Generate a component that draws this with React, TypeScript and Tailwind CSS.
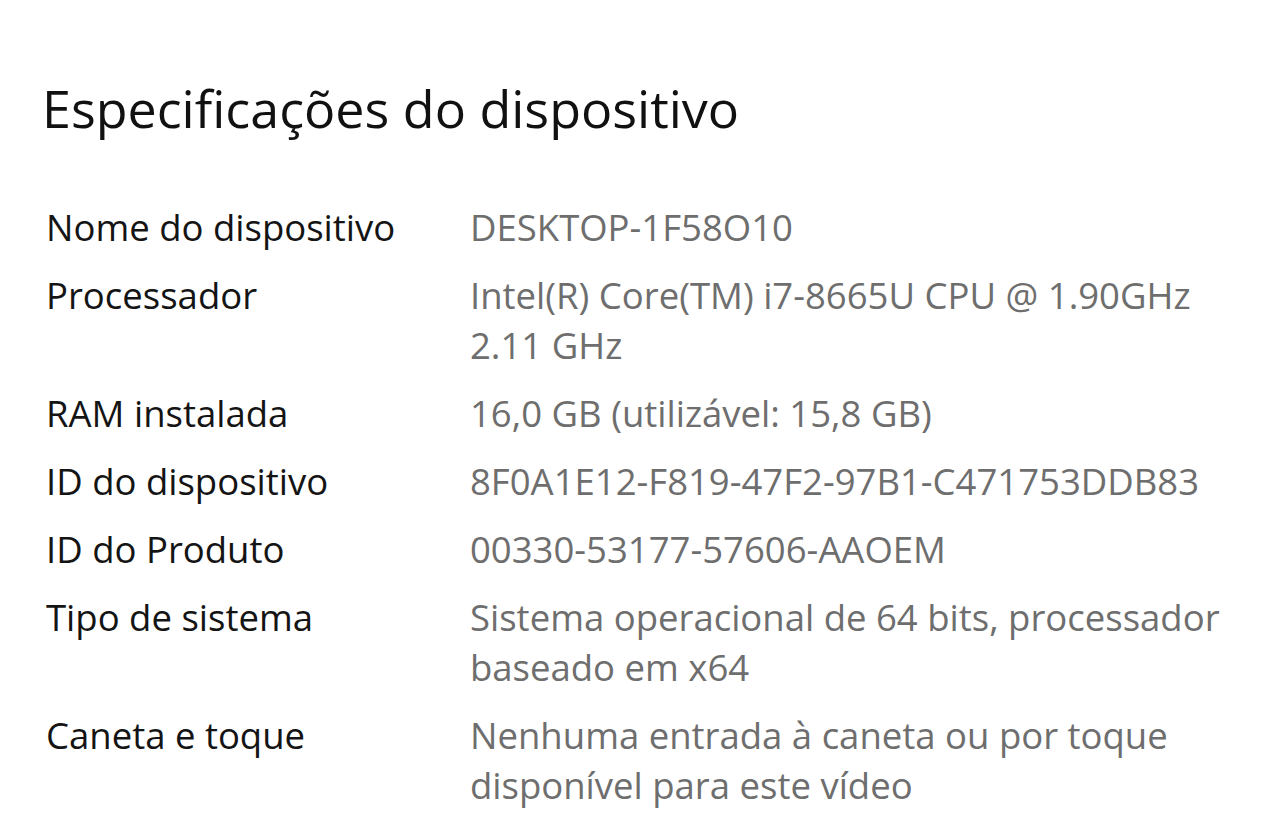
const SPECS: { label: string; value: string }[] = [
  { label: 'Nome do dispositivo', value: 'DESKTOP-1F58O10' },
  { label: 'Processador', value: 'Intel(R) Core(TM) i7-8665U CPU @ 1.90GHz 2.11 GHz' },
  { label: 'RAM instalada', value: '16,0 GB (utilizável: 15,8 GB)' },
  { label: 'ID do dispositivo', value: '8F0A1E12-F819-47F2-97B1-C471753DDB83' },
  { label: 'ID do Produto', value: '00330-53177-57606-AAOEM' },
  { label: 'Tipo de sistema', value: 'Sistema operacional de 64 bits, processador baseado em x64' },
  { label: 'Caneta e toque', value: 'Nenhuma entrada à caneta ou por toque disponível para este vídeo' },
]

export default function App() {
  return (
    <div className="min-h-[836px] w-[1280px] bg-white font-['Open_Sans','Noto_Sans',sans-serif] antialiased">
      <div className="pl-[42px] pt-[72px]">
        <h1 className="text-[52px] leading-[72px] font-normal text-[#111]">
          Especificações do dispositivo
        </h1>
      </div>

      <div className="mt-[58px] flex flex-col gap-[18px] pl-[46px]">
        {SPECS.map(s => (
          <div key={s.label} className="flex text-[36.5px] leading-[50px]">
            <div className="w-[424px] shrink-0 text-[#141414]">{s.label}</div>
            <div className="w-[770px] text-[#6e6e6e]">{s.value}</div>
          </div>
        ))}
      </div>
    </div>
  )
}
